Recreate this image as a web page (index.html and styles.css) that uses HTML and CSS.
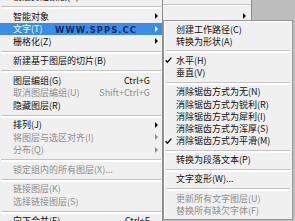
FILE: index.html
```html
<!DOCTYPE html>
<html lang="zh-CN">
<head>
<meta charset="utf-8">
<title>图层菜单</title>
<link rel="stylesheet" href="styles.css">
</head>
<body>
<div class="screen">
  <div class="menu main">
    <div class="item cut"><span class="label">创建剪贴蒙版(C)</span><span class="key">Alt+Ctrl+G</span><span class="arr"></span></div>
    <div class="sep"></div>
    <div class="item"><span class="label">智能对象</span><span class="arr on"></span></div>
    <div class="item hl"><span class="label">文字(T)</span><span class="wm">WWW.SPPS.CC</span><span class="arr on"></span></div>
    <div class="item"><span class="label">栅格化(Z)</span><span class="arr on"></span></div>
    <div class="sep"></div>
    <div class="item"><span class="label">新建基于图层的切片(B)</span><span class="arr"></span></div>
    <div class="sep"></div>
    <div class="item"><span class="label">图层编组(G)</span><span class="key">Ctrl+G</span><span class="arr"></span></div>
    <div class="item off"><span class="label">取消图层编组(U)</span><span class="key">Shift+Ctrl+G</span><span class="arr"></span></div>
    <div class="item"><span class="label">隐藏图层(R)</span><span class="arr"></span></div>
    <div class="sep"></div>
    <div class="item"><span class="label">排列(J)</span><span class="arr on"></span></div>
    <div class="item off"><span class="label">将图层与选区对齐(I)</span><span class="arr on"></span></div>
    <div class="item off"><span class="label">分布(Q)</span><span class="arr on"></span></div>
    <div class="sep"></div>
    <div class="item off"><span class="label">锁定组内的所有图层(X)...</span><span class="arr"></span></div>
    <div class="sep"></div>
    <div class="item off"><span class="label">链接图层(K)</span><span class="arr"></span></div>
    <div class="item off"><span class="label">选择链接图层(S)</span><span class="arr"></span></div>
    <div class="sep"></div>
    <div class="item"><span class="label">向下合并(E)</span><span class="key">Ctrl+E</span><span class="arr"></span></div>
  </div>
  <div class="side">
    <div class="strip">
      <div class="back"><div class="bsep"></div><span class="arr on"></span></div>
    </div>
    <div class="menu sub">
      <div class="sitem"><span class="chk"></span><span class="label">创建工作路径(C)</span></div>
      <div class="sitem"><span class="chk"></span><span class="label">转换为形状(A)</span></div>
      <div class="sep"></div>
      <div class="sitem"><span class="chk"><svg width="7" height="6" viewBox="0 0 7 6"><path d="M0.6 3.2 L2.4 5.2 L6.4 0.6" fill="none" stroke="#000" stroke-width="1.3"/></svg></span><span class="label">水平(H)</span></div>
      <div class="sitem"><span class="chk"></span><span class="label">垂直(V)</span></div>
      <div class="sep"></div>
      <div class="sitem"><span class="chk"></span><span class="label">消除锯齿方式为无(N)</span></div>
      <div class="sitem"><span class="chk"></span><span class="label">消除锯齿方式为锐利(R)</span></div>
      <div class="sitem"><span class="chk"></span><span class="label">消除锯齿方式为犀利(I)</span></div>
      <div class="sitem"><span class="chk"></span><span class="label">消除锯齿方式为浑厚(S)</span></div>
      <div class="sitem"><span class="chk"><svg width="7" height="6" viewBox="0 0 7 6"><path d="M0.6 3.2 L2.4 5.2 L6.4 0.6" fill="none" stroke="#000" stroke-width="1.3"/></svg></span><span class="label">消除锯齿方式为平滑(M)</span></div>
      <div class="sep"></div>
      <div class="sitem"><span class="chk"></span><span class="label">转换为段落文本(P)</span></div>
      <div class="sep"></div>
      <div class="sitem"><span class="chk"></span><span class="label">文字变形(W)...</span></div>
      <div class="sep"></div>
      <div class="sitem off"><span class="chk"></span><span class="label">更新所有文字图层(U)</span></div>
      <div class="sitem off"><span class="chk"></span><span class="label">替换所有缺欠字体(F)</span></div>
    </div>
  </div>
</div>
</body>
</html>
```

FILE: styles.css
```css
* {
  box-sizing: border-box;
  margin: 0;
  padding: 0;
}

html,
body {
  width: 295px;
  height: 221px;
  overflow: hidden;
}

body {
  background: #bdbdbd;
  font-family: "Noto Sans CJK SC", "Noto Sans", sans-serif;
  font-size: 9px;
  color: #111;
}

.screen {
  display: flex;
  width: 295px;
  height: 221px;
}

.menu {
  background: #f0f0f0;
  display: flex;
  flex-direction: column;
}

.main {
  width: 163px;
  flex: none;
  border-right: 1px solid #8c8c8c;
  overflow: hidden;
}

.item {
  position: relative;
  display: flex;
  align-items: center;
  flex: none;
  height: 12.5px;
  padding-left: 13px;
  white-space: nowrap;
  line-height: 1;
}

.cut {
  margin-top: -9.5px;
}

.label {
  flex: 1;
}

.key {
  flex: none;
}

.arr {
  flex: none;
  width: 3px;
  height: 6px;
  margin: 0 4px 0 5px;
}

.arr.on {
  border-left: 3px solid #111;
  border-top: 3px solid transparent;
  border-bottom: 3px solid transparent;
}

.off {
  color: #8e8e8e;
}

.off .arr.on {
  border-left-color: #8e8e8e;
}

.hl {
  background: #3b8de6;
  color: #fff;
}

.hl .arr.on {
  border-left-color: #fff;
}

.wm {
  position: absolute;
  left: 55px;
  top: 3px;
  font-family: "DejaVu Sans", sans-serif;
  font-weight: bold;
  font-size: 8.5px;
  letter-spacing: 1px;
  line-height: 1;
  color: #1a2a6c;
}

.sep {
  flex: none;
  height: 7px;
  padding-top: 3px;
  margin: 0 1px;
}

.sep::before {
  content: "";
  display: block;
  height: 2px;
  border-top: 1px solid #c4c4c4;
  background: #fff;
}

.side {
  flex: none;
  width: 132px;
  display: flex;
  flex-direction: column;
}

.strip {
  flex: none;
  height: 20px;
  display: flex;
}

.back {
  width: 89px;
  background: #f0f0f0;
  border-right: 1px solid #8c8c8c;
  display: flex;
  flex-direction: column;
  align-items: flex-end;
}

.bsep {
  align-self: stretch;
  margin-top: 4px;
  height: 2px;
  border-top: 1px solid #c4c4c4;
  background: #fff;
}

.back .arr {
  margin: 7px 5px 0 0;
}

.sub {
  flex: none;
  width: 130px;
  height: 200px;
  border: 1px solid #979797;
  box-shadow: inset 1px 1px 0 #fff;
  padding-top: 2px;
  overflow: hidden;
}

.sub .sep {
  margin: 0 2px;
}

.sitem {
  display: flex;
  align-items: center;
  flex: none;
  height: 12.2px;
  padding-left: 1px;
  white-space: nowrap;
  line-height: 1;
}

.chk {
  flex: none;
  width: 11px;
  display: flex;
  align-items: center;
}
```
